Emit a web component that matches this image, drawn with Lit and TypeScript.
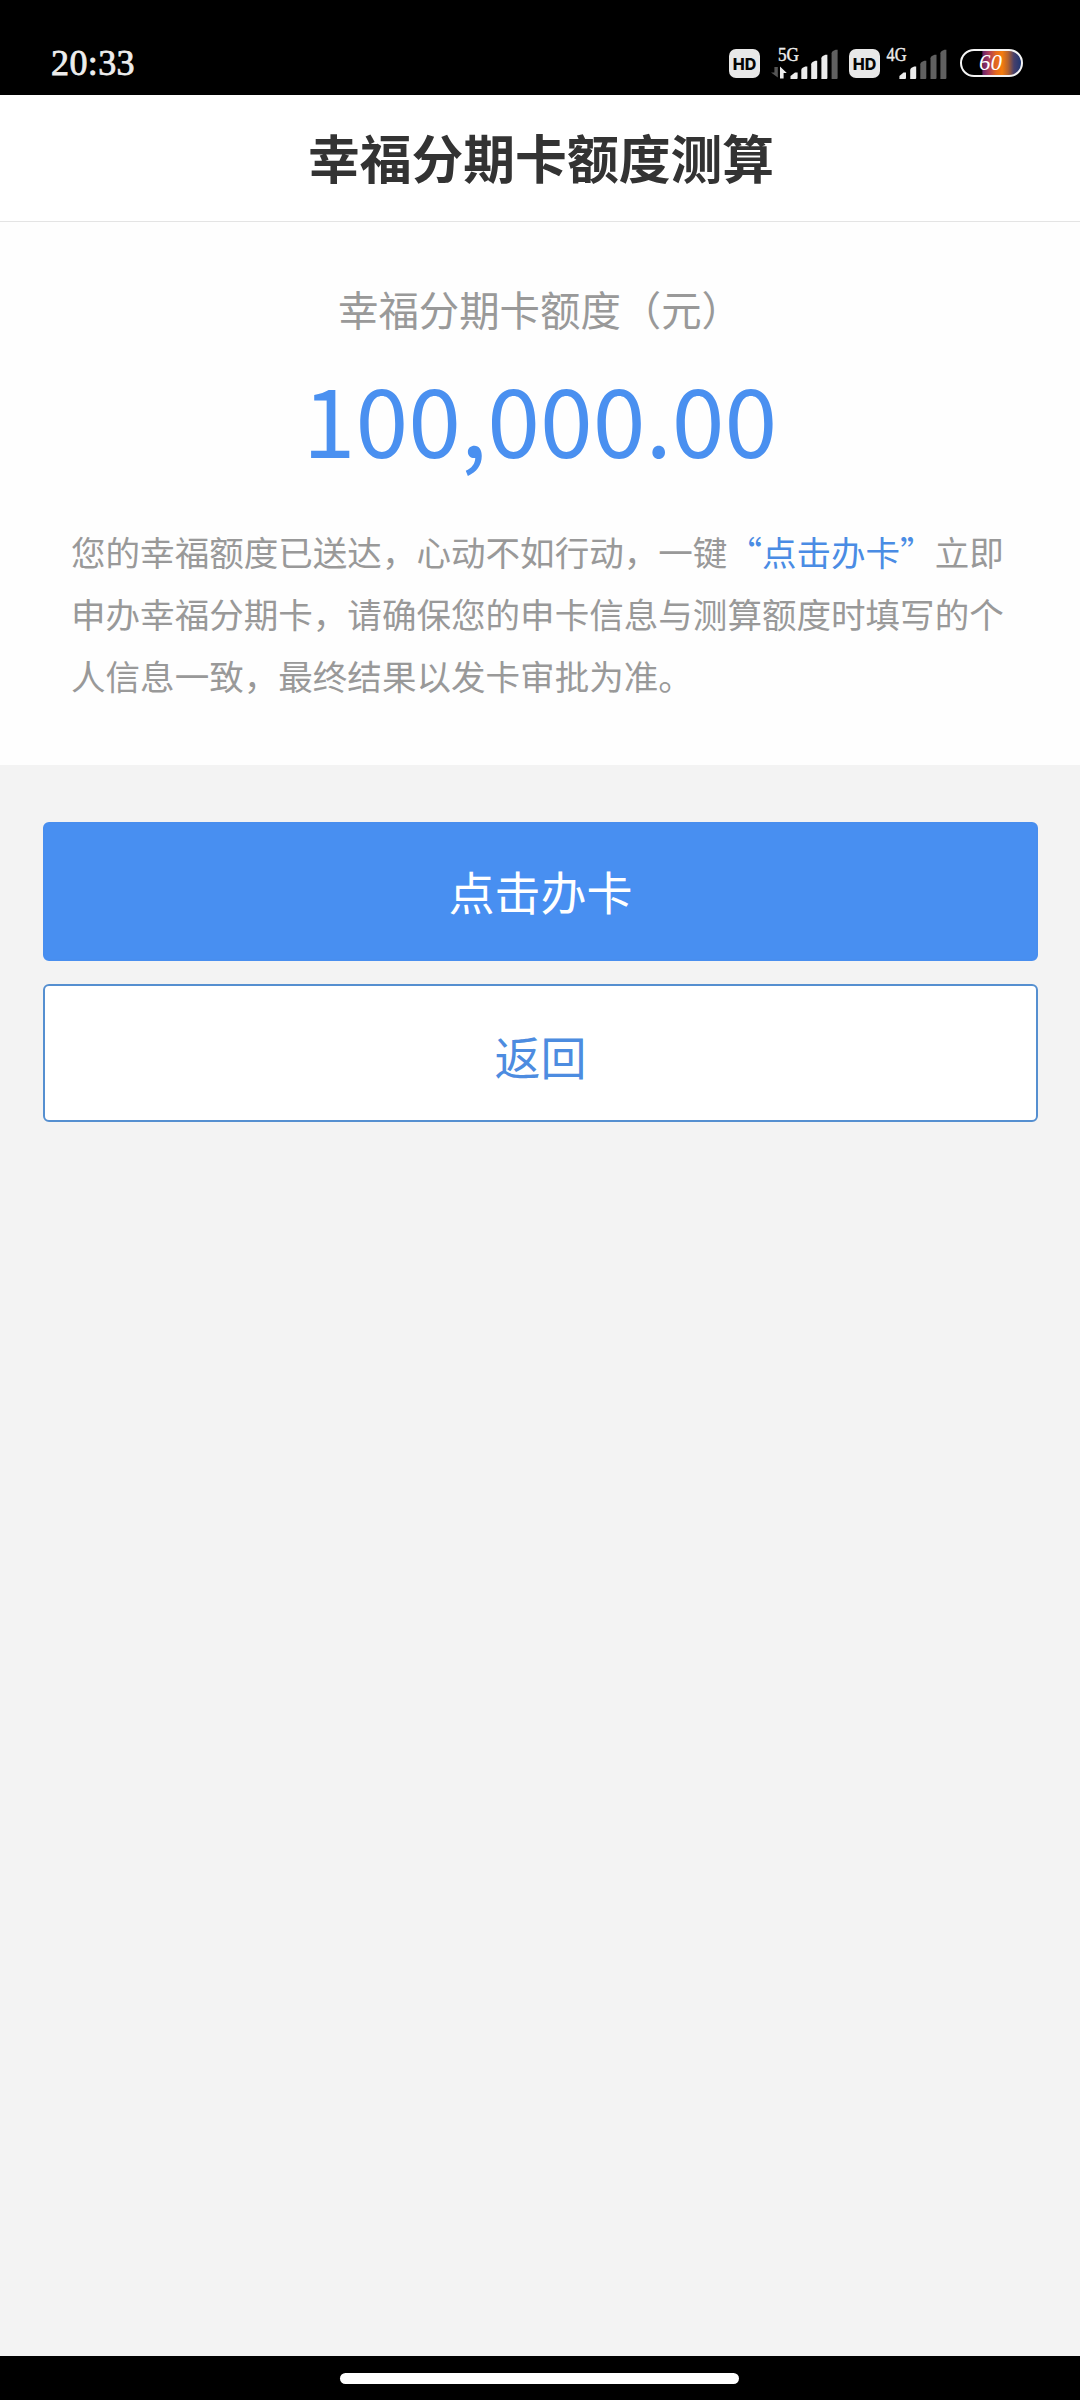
import { LitElement, html, css, svg } from "lit";
import { customElement, property } from "lit/decorators.js";

const BASE_FONT = css`"Noto Sans CJK SC", "Noto Sans", sans-serif`;

@customElement("status-bar")
class StatusBar extends LitElement {
  static styles = css`
    :host {
      display: block;
      background: #000;
    }
    .bar {
      box-sizing: border-box;
      height: 95px;
      padding: 31px 57px 0 51px;
      display: flex;
      align-items: center;
      justify-content: space-between;
    }
    .time {
      font: 36px/36px "Liberation Serif", serif;
      color: #ededed;
      letter-spacing: 0.4px;
      -webkit-text-stroke: 0.8px #ededed;
    }
    .icons {
      display: flex;
      align-items: center;
    }
    svg {
      display: block;
    }
    .hd {
      width: 31px;
      height: 29px;
      border-radius: 7px;
      background: #e8e8e8;
      color: #050505;
      font: 800 16px/30px Inter, sans-serif;
      text-align: center;
    }
    .signal-a {
      margin: 0 9px 0 10px;
    }
    .signal-b {
      margin: 0 10px 0 5px;
    }
    .net {
      font: 18px "Liberation Serif", serif;
      fill: #ededed;
      stroke: #ededed;
      stroke-width: 0.4px;
    }
    .battery {
      box-sizing: border-box;
      width: 63px;
      height: 28px;
      border: 2px solid #f4f4f4;
      border-radius: 14px;
      background: linear-gradient(
        90deg,
        #000 0 33%,
        #6b2468 36%,
        #a83a5c 45%,
        #e56a1c 58%,
        #f57c0c 68%,
        #b4622e 78%,
        #47406a 88%,
        #1f3672 100%
      );
      color: #fff;
      font: italic 23px/24px "Liberation Serif", serif;
      text-align: center;
      padding-right: 2px;
    }
  `;

  private bars(xs: number[][], lit: number) {
    return xs.map(
      ([x, top], i) => svg`<path
        d=${`M${x} 33V${top + 3.5}Q${x} ${top + 2} ${x + 1.4} ${top + 1.2}L${x + 4} ${top}H${x + 6}V32Q${x + 6} 33 ${x + 5} 33Z`}
        fill=${i < lit ? "#ececec" : "#606060"}/>`,
    );
  }

  render() {
    return html`
      <div class="bar">
        <span class="time">20:33</span>
        <div class="icons">
          <span class="hd">HD</span>
          <svg class="signal-a" width="70" height="34" viewBox="0 0 70 34">
            <text class="net" x="8" y="15" textLength="21" lengthAdjust="spacingAndGlyphs">5G</text>
            <path d="M7.8 21V31.5L1 26.5H4.4V21Z" fill="#555" />
            <path d="M10 32.5V20.5L16.8 27H13.6V32.5Z" fill="#ececec" />
            <path d="M20.5 33V30L25 26.5H27.6V32Q27.6 33 26.6 33Z" fill="#ececec" />
            ${this.bars([[31.3, 20.5], [41.2, 14.8], [51.4, 8.8], [61.6, 3.8]], 3)}
          </svg>
          <span class="hd">HD</span>
          <svg class="signal-b" width="65" height="34" viewBox="0 0 65 34">
            <text class="net" x="1.5" y="15" textLength="20" lengthAdjust="spacingAndGlyphs">4G</text>
            <path d="M14.4 33V30L18.5 26.5H21V32Q21 33 20 33Z" fill="#ececec" />
            ${this.bars([[25.2, 20.5], [35.3, 14.8], [45.5, 8.8], [55.4, 3.8]], 1)}
          </svg>
          <span class="battery">60</span>
        </div>
      </div>
    `;
  }
}

@customElement("action-button")
class ActionButton extends LitElement {
  @property() label = "";
  @property({ reflect: true }) variant = "primary";

  static styles = css`
    :host {
      display: block;
    }
    .button {
      box-sizing: border-box;
      display: block;
      width: 100%;
      margin: 0;
      padding: 0 0 4px;
      border: 2px solid #488eef;
      border-radius: 6px;
      background: #488ff1;
      color: #fff;
      height: 139px;
      font: 46px/66px ${BASE_FONT};
      text-align: center;
    }
    :host([variant="outline"]) .button {
      height: 138px;
      padding: 4px 0 0;
      border-color: #558fd0;
      background: #fff;
      color: #4d8ce0;
    }
  `;

  render() {
    return html`<button class="button">${this.label}</button>`;
  }
}

@customElement("app-root")
class AppRoot extends LitElement {
  static styles = css`
    :host {
      display: block;
      font-family: ${BASE_FONT};
    }
    .screen {
      display: flex;
      flex-direction: column;
      height: 2400px;
      background: #f3f3f3;
    }
    .header {
      box-sizing: border-box;
      height: 127px;
      border-bottom: 1px solid #e4e4e4;
      background: #fff;
      color: #333;
      margin: 0;
      padding-left: 2px;
      font-size: 51.8px;
      line-height: 124px;
      font-weight: 700;
      text-align: center;
    }
    .result {
      box-sizing: border-box;
      height: 543px;
      padding: 57px 70px 0;
      background: #fefefe;
      color: #999;
      text-align: center;
    }
    .label {
      font-size: 40.4px;
      line-height: 60px;
    }
    .amount {
      margin-top: 28px;
      font-size: 95px;
      line-height: 100px;
      color: #4a90f0;
    }
    .note {
      margin: 53px 0 0 1px;
      font-size: 34.56px;
      line-height: 62px;
      text-align: left;
      white-space: nowrap;
    }
    .link {
      color: #4a8ce4;
    }
    .actions {
      flex: 1;
      display: flex;
      flex-direction: column;
      gap: 23px;
      padding: 57px 42px 0 43px;
    }
    .nav {
      box-sizing: border-box;
      height: 44px;
      padding: 17px 1px 0 0;
      background: #000;
    }
    .handle {
      width: 399px;
      height: 11px;
      margin: 0 auto;
      border-radius: 6px;
      background: #fff;
    }
  `;

  render() {
    return html`
      <div class="screen">
        <status-bar></status-bar>
        <h1 class="header">幸福分期卡额度测算</h1>
        <section class="result">
          <div class="label">幸福分期卡额度（元）</div>
          <div class="amount">100,000.00</div>
          <p class="note">您的幸福额度已送达，心动不如行动，一键<span class="link">“点击办卡”</span>立即<br />申办幸福分期卡，请确保您的申卡信息与测算额度时填写的个<br />人信息一致，最终结果以发卡审批为准。</p>
        </section>
        <div class="actions">
          <action-button label="点击办卡"></action-button>
          <action-button label="返回" variant="outline"></action-button>
        </div>
        <div class="nav"><div class="handle"></div></div>
      </div>
    `;
  }
}
